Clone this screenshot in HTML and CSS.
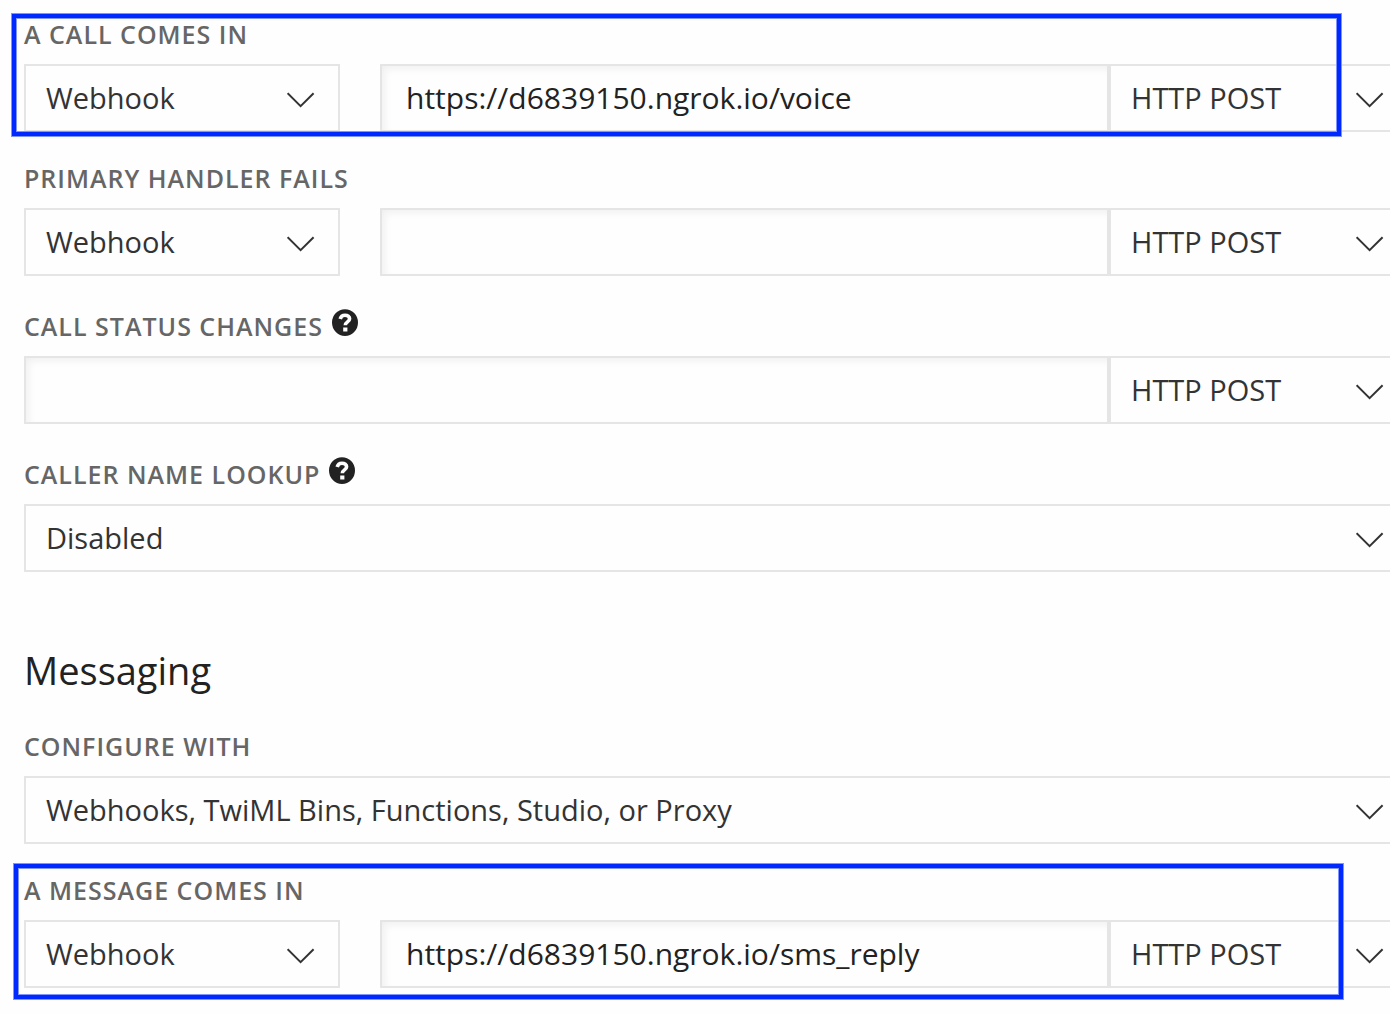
FILE: index.html
```html
<!DOCTYPE html>
<html lang="en">
<head>
<meta charset="utf-8">
<meta name="viewport" content="width=device-width, initial-scale=1">
<title>Phone number configuration</title>
<link rel="stylesheet" href="styles.css">
</head>
<body>
<svg class="sprite" aria-hidden="true">
  <symbol id="chevron" viewBox="0 0 28 16"><path d="M.6 1.200 13.600 14.200 26.600 1.200" fill="none" stroke="currentColor" stroke-width="2"/></symbol>
  <symbol id="help" viewBox="0 0 26 28"><ellipse cx="13" cy="13.600" rx="13" ry="13.400" fill="currentColor"/><path d="M8.2 10C8.800 7.400 10.600 6.200 13 6.200c2.700 0 4.600 1.400 4.600 3.600 0 3.100-4.300 3-4.300 6.400" fill="none" stroke="#fff" stroke-width="3.600"/><path d="M11.200 18.500h4.200v4h-4.200z" fill="#fff"/></symbol>
</svg>
<form class="settings">
  <section class="group highlight highlight-call">
    <div class="label-row"><label for="call-handler">A CALL COMES IN</label></div>
    <div class="fields">
      <div class="select handler"><select id="call-handler"><option>Webhook</option></select><svg class="chevron"><use href="#chevron"/></svg></div>
      <input class="url" type="text" aria-label="Call webhook URL" value="https://d6839150.ngrok.io/voice">
      <div class="select method"><select aria-label="Call HTTP method"><option>HTTP POST</option></select><svg class="chevron"><use href="#chevron"/></svg></div>
    </div>
  </section>
  <section class="group">
    <div class="label-row"><label for="fallback-handler">PRIMARY HANDLER FAILS</label></div>
    <div class="fields">
      <div class="select handler"><select id="fallback-handler"><option>Webhook</option></select><svg class="chevron"><use href="#chevron"/></svg></div>
      <input class="url" type="text" aria-label="Fallback webhook URL">
      <div class="select method"><select aria-label="Fallback HTTP method"><option>HTTP POST</option></select><svg class="chevron"><use href="#chevron"/></svg></div>
    </div>
  </section>
  <section class="group">
    <div class="label-row with-help"><label for="status-url">CALL STATUS CHANGES</label><button class="help" type="button" aria-label="About call status changes"><svg><use href="#help"/></svg></button></div>
    <div class="fields">
      <input class="url" id="status-url" type="text">
      <div class="select method"><select aria-label="Status HTTP method"><option>HTTP POST</option></select><svg class="chevron"><use href="#chevron"/></svg></div>
    </div>
  </section>
  <section class="group">
    <div class="label-row with-help"><label for="lookup">CALLER NAME LOOKUP</label><button class="help" type="button" aria-label="About caller name lookup"><svg><use href="#help"/></svg></button></div>
    <div class="fields">
      <div class="select wide"><select id="lookup"><option>Disabled</option></select><svg class="chevron"><use href="#chevron"/></svg></div>
    </div>
  </section>
  <h2>Messaging</h2>
  <section class="group">
    <div class="label-row"><label for="configure">CONFIGURE WITH</label></div>
    <div class="fields">
      <div class="select wide"><select id="configure"><option>Webhooks, TwiML Bins, Functions, Studio, or Proxy</option></select><svg class="chevron"><use href="#chevron"/></svg></div>
    </div>
  </section>
  <section class="group highlight highlight-message">
    <div class="label-row"><label for="message-handler">A MESSAGE COMES IN</label></div>
    <div class="fields">
      <div class="select handler"><select id="message-handler"><option>Webhook</option></select><svg class="chevron"><use href="#chevron"/></svg></div>
      <input class="url" type="text" aria-label="Message webhook URL" value="https://d6839150.ngrok.io/sms_reply">
      <div class="select method"><select aria-label="Message HTTP method"><option>HTTP POST</option></select><svg class="chevron"><use href="#chevron"/></svg></div>
    </div>
  </section>
</form>
</body>
</html>
```
FILE: styles.css
```css
* { box-sizing: border-box; }

body {
  margin: 0;
  overflow-x: hidden;
  background: #fefefe;
  color: #333;
  font-family: "Open Sans", "Noto Sans", sans-serif;
  font-size: 29px;
}

.sprite { display: none; }

/* The form runs a little past the right edge of the window. */
.settings {
  margin-right: -19px;
  padding: 18px 0 24px 24px;
}

.group { position: relative; }
.group + .group { margin-top: 30px; }

.label-row {
  display: flex;
  align-items: flex-end;
  gap: 9px;
  margin-bottom: 14px;
}

.with-help { height: 36px; }

label {
  color: #666;
  font-size: 25px;
  font-weight: 600;
  line-height: 32px;
  letter-spacing: 1px;
}

.help {
  display: flex;
  align-items: center;
  align-self: flex-start;
  width: 26px;
  height: 34px;
  padding: 0;
  border: 0;
  background: none;
  color: #222;
}

.help svg { width: 26px; height: 28px; }

.fields { display: flex; }

.select { position: relative; height: 68px; }
.handler { flex: 0 0 316px; margin-right: 40px; }
.method { flex: 0 0 300px; }
.wide { flex: 1; }

select,
.url {
  height: 68px;
  margin: 0;
  border: 2px solid #e5e5e5;
  border-radius: 0;
  background: #fefefe;
  color: inherit;
  font: inherit;
}

select {
  width: 100%;
  padding: 0 60px 2px 20px;
  appearance: none;
}

.url {
  flex: 1;
  min-width: 0;
  padding: 0 24px 2px;
  color: #222;
  font-size: 30px;
  box-shadow: inset 4px 4px 8px -2px #eee;
}

.chevron {
  position: absolute;
  top: 28px;
  right: 25px;
  width: 28px;
  height: 16px;
  overflow: visible;
  pointer-events: none;
}

h2 {
  margin: 74px 0 36px;
  color: #222;
  font-size: 38px;
  font-weight: 400;
  line-height: 48px;
}

/* Marker frames drawn over the rows to fill in. */
.highlight::after {
  content: "";
  position: absolute;
  border: 4px solid #0029ff;
  box-shadow: 0 0 0 1px #8094ff, inset 0 0 0 1px #8094ff;
  pointer-events: none;
}

.highlight-call::after { inset: -4px 68px -4px -12px; }
.highlight-message::after { inset: -10px 66px -11px -10px; }
```
